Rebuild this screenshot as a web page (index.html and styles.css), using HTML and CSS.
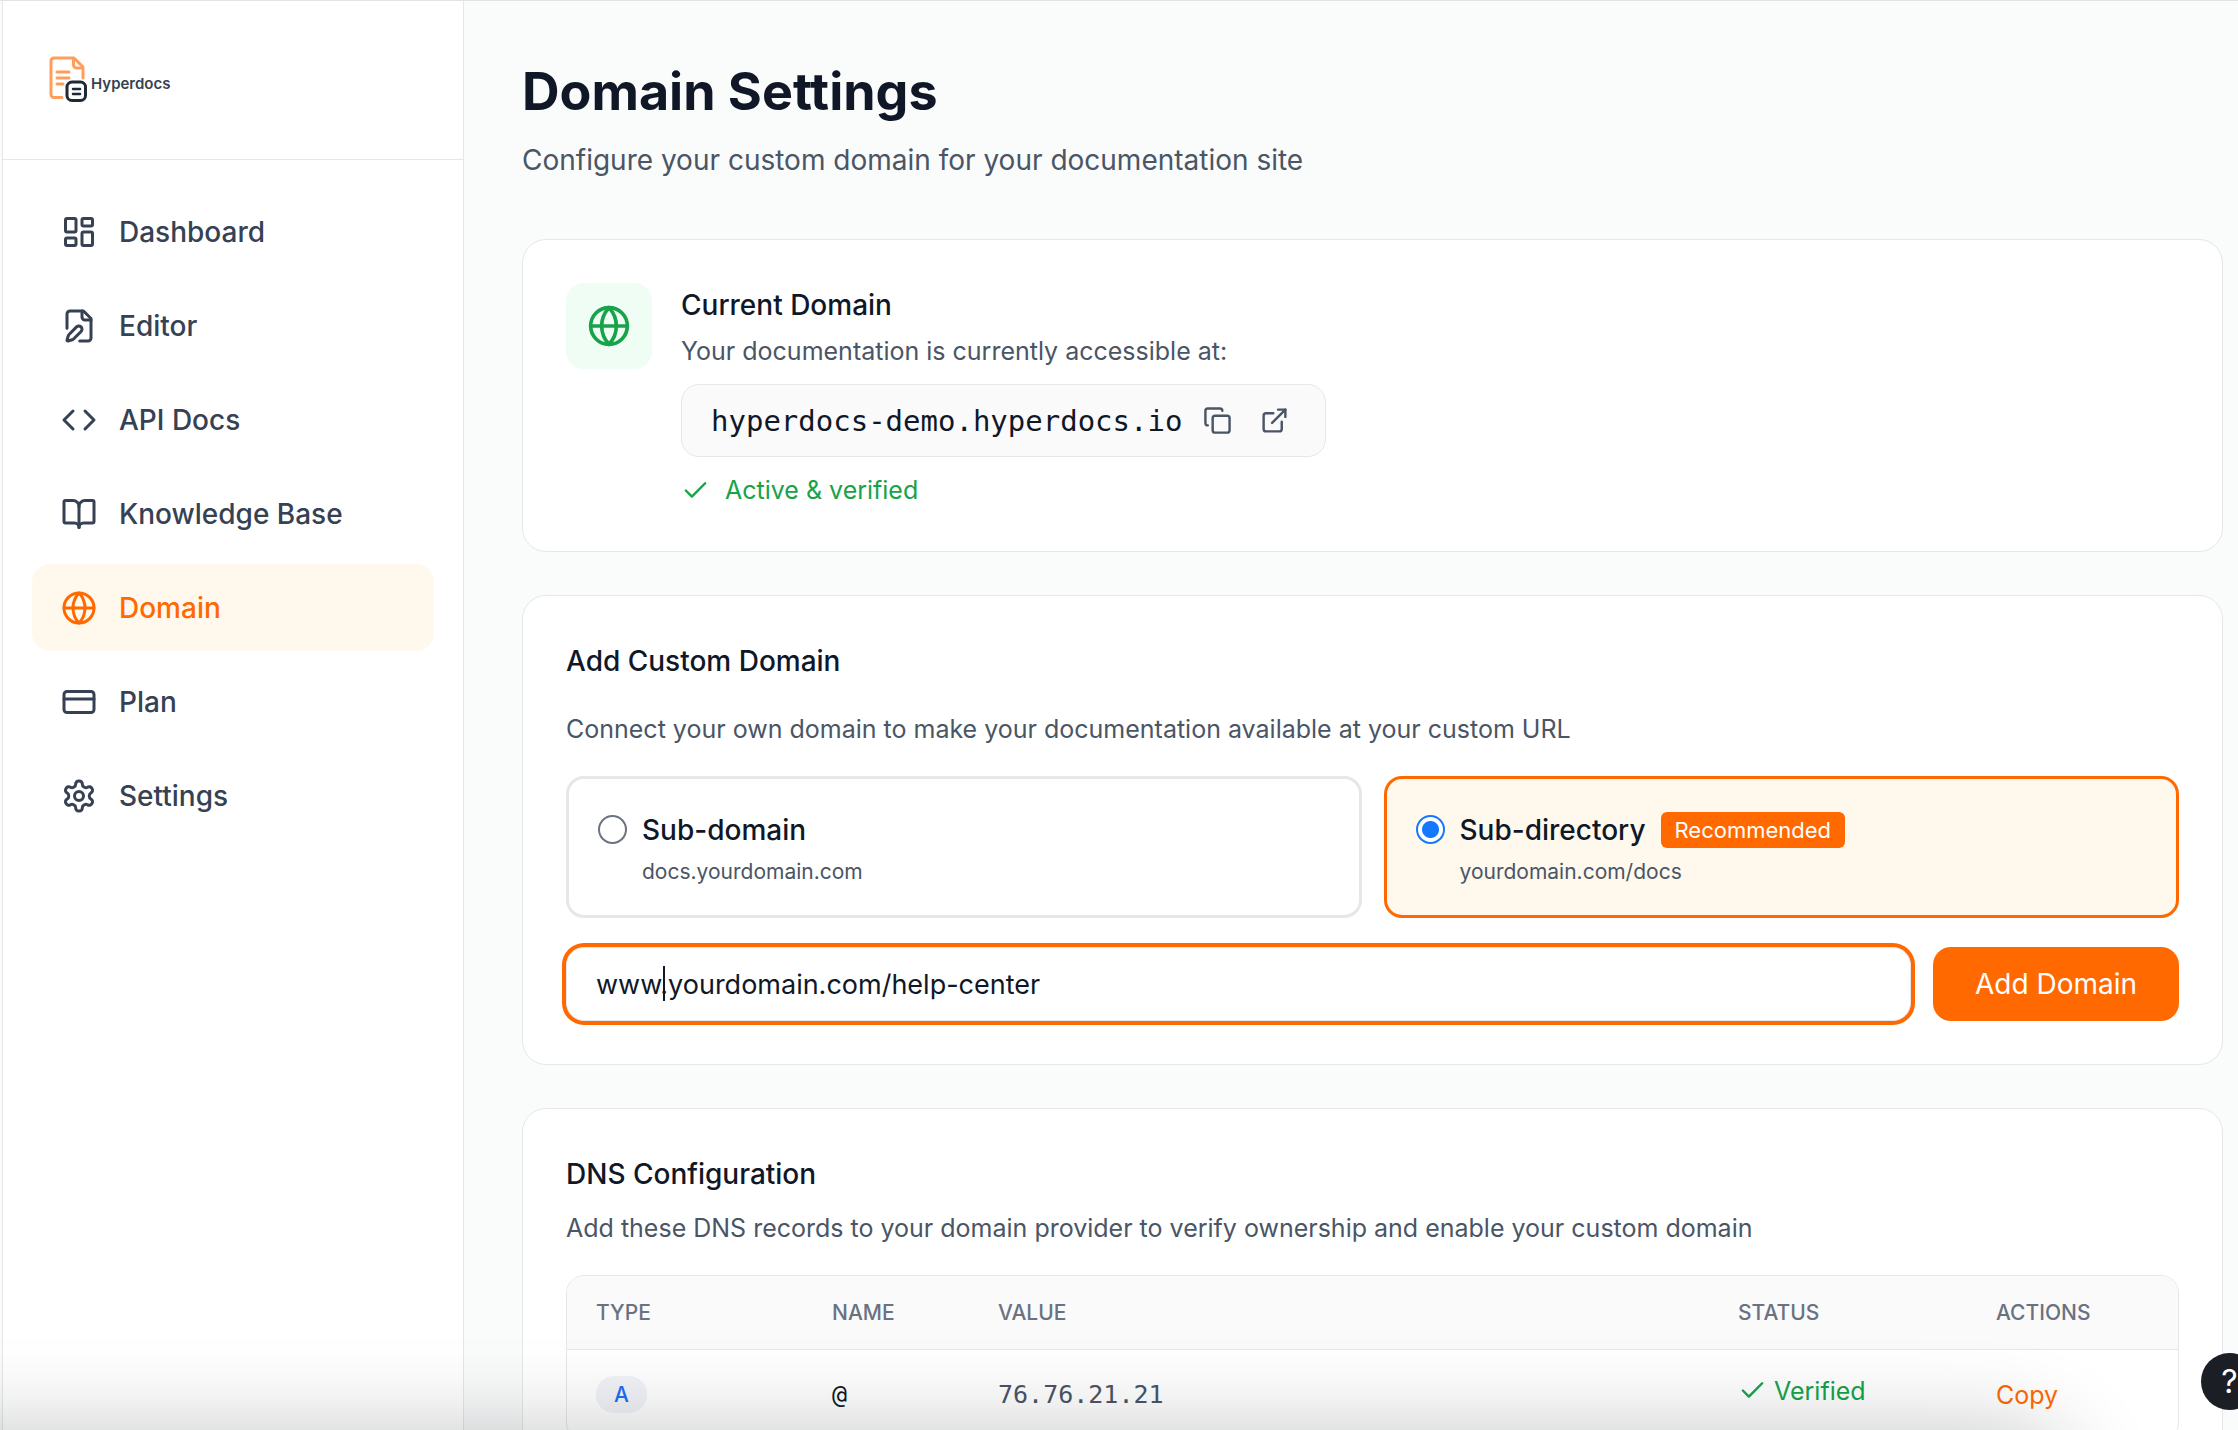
FILE: index.html
```html
<!DOCTYPE html>
<html lang="en">
<head>
  <meta charset="utf-8">
  <meta name="viewport" content="width=device-width, initial-scale=1">
  <title>Domain Settings – Hyperdocs</title>
  <link rel="stylesheet" href="styles.css">
</head>
<body>
  <svg class="sprite" aria-hidden="true">
    <symbol id="i-globe" viewBox="0 0 24 24"><circle cx="12" cy="12" r="10"/><path d="M12 2a14.5 14.5 0 0 0 0 20 14.5 14.5 0 0 0 0-20"/><path d="M2 12h20"/></symbol>
    <symbol id="i-check" viewBox="0 0 24 24"><path d="M20 6 9 17l-5-5"/></symbol>
  </svg>
  <div class="app">
    <aside class="sidebar">
      <a class="brand" href="#">
        <svg class="brand-mark" viewBox="0 0 38 46" fill="none" stroke-linecap="round" stroke-linejoin="round">
          <g stroke="#ff9d5c" stroke-width="3">
            <path d="M13 40.500H5a3 3 0 0 1-3-3V4a3 3 0 0 1 3-3h20l9 9v11"/>
            <path d="M24.500 2v6a3 3 0 0 0 3 3h6"/>
            <path d="M8 15h12M8 21h12M8 27h6"/>
          </g>
          <rect x="18" y="25" width="18.500" height="18.500" rx="5" stroke="#1f2937" stroke-width="3"/>
          <path d="M24 32h7M24 37h7" stroke="#1f2937" stroke-width="2.500"/>
        </svg>
        <span class="brand-name">Hyperdocs</span>
      </a>
      <nav class="nav" aria-label="Main">
        <a class="nav-item" href="#"><svg class="icon icon-lg" viewBox="0 0 24 24"><rect width="7" height="9" x="3" y="3" rx="1"/><rect width="7" height="5" x="14" y="3" rx="1"/><rect width="7" height="9" x="14" y="12" rx="1"/><rect width="7" height="5" x="3" y="16" rx="1"/></svg>Dashboard</a>
        <a class="nav-item" href="#"><svg class="icon icon-lg" viewBox="0 0 24 24"><path d="M12.500 22H18a2 2 0 0 0 2-2V7l-5-5H6a2 2 0 0 0-2 2v9.500"/><path d="M14 2v4a2 2 0 0 0 2 2h4"/><path d="M13.378 15.626a1 1 0 1 0-3.004-3.004l-5.010 5.012a2 2 0 0 0-.506.854l-.837 2.870a.5.5 0 0 0 .620.620l2.870-.837a2 2 0 0 0 .854-.506z"/></svg>Editor</a>
        <a class="nav-item" href="#"><svg class="icon icon-lg" viewBox="0 0 24 24"><path d="m16 18 6-6-6-6"/><path d="m8 6-6 6 6 6"/></svg>API Docs</a>
        <a class="nav-item" href="#"><svg class="icon icon-lg" viewBox="0 0 24 24"><path d="M12 7v14"/><path d="M3 18a1 1 0 0 1-1-1V4a1 1 0 0 1 1-1h5a4 4 0 0 1 4 4 4 4 0 0 1 4-4h5a1 1 0 0 1 1 1v13a1 1 0 0 1-1 1h-6a3 3 0 0 0-3 3 3 3 0 0 0-3-3z"/></svg>Knowledge Base</a>
        <a class="nav-item active" href="#" aria-current="page"><svg class="icon icon-lg"><use href="#i-globe"/></svg>Domain</a>
        <a class="nav-item" href="#"><svg class="icon icon-lg" viewBox="0 0 24 24"><rect width="20" height="14" x="2" y="5" rx="2"/><path d="M2 10h20"/></svg>Plan</a>
        <a class="nav-item" href="#"><svg class="icon icon-lg" viewBox="0 0 24 24"><path d="M12.220 2h-.440a2 2 0 0 0-2 2v.180a2 2 0 0 1-1 1.730l-.430.250a2 2 0 0 1-2 0l-.150-.080a2 2 0 0 0-2.730.730l-.220.380a2 2 0 0 0 .730 2.730l.150.100a2 2 0 0 1 1 1.720v.510a2 2 0 0 1-1 1.740l-.150.090a2 2 0 0 0-.730 2.730l.220.380a2 2 0 0 0 2.730.730l.150-.080a2 2 0 0 1 2 0l.430.250a2 2 0 0 1 1 1.730V20a2 2 0 0 0 2 2h.440a2 2 0 0 0 2-2v-.180a2 2 0 0 1 1-1.730l.430-.250a2 2 0 0 1 2 0l.150.080a2 2 0 0 0 2.730-.730l.220-.390a2 2 0 0 0-.730-2.730l-.150-.080a2 2 0 0 1-1-1.740v-.500a2 2 0 0 1 1-1.740l.150-.090a2 2 0 0 0 .730-2.730l-.220-.380a2 2 0 0 0-2.730-.730l-.150.080a2 2 0 0 1-2 0l-.430-.250a2 2 0 0 1-1-1.730V4a2 2 0 0 0-2-2z"/><circle cx="12" cy="12" r="3"/></svg>Settings</a>
      </nav>
    </aside>

    <main class="main">
      <header class="page-head">
        <h1>Domain Settings</h1>
        <p>Configure your custom domain for your documentation site</p>
      </header>

      <section class="card current">
        <div class="tile"><svg class="icon icon-xl"><use href="#i-globe"/></svg></div>
        <div class="current-body">
          <h2>Current Domain</h2>
          <p class="note">Your documentation is currently accessible at:</p>
          <div class="domain-box">
            <code>hyperdocs-demo.hyperdocs.io</code>
            <button class="icon-btn" type="button" aria-label="Copy domain"><svg class="icon" viewBox="0 0 24 24"><rect width="14" height="14" x="8" y="8" rx="2"/><path d="M4 16c-1.100 0-2-.900-2-2V4c0-1.100.900-2 2-2h10c1.100 0 2 .900 2 2"/></svg></button>
            <a class="icon-btn" href="#" aria-label="Open site"><svg class="icon" viewBox="0 0 24 24"><path d="M15 3h6v6"/><path d="M10 14 21 3"/><path d="M18 13v6a2 2 0 0 1-2 2H5a2 2 0 0 1-2-2V8a2 2 0 0 1 2-2h6"/></svg></a>
          </div>
          <p class="verified"><svg class="icon"><use href="#i-check"/></svg>Active &amp; verified</p>
        </div>
      </section>

      <section class="card">
        <h2 class="spaced">Add Custom Domain</h2>
        <p class="note">Connect your own domain to make your documentation available at your custom URL</p>
        <form class="domain-form">
          <div class="options">
            <label class="option">
              <input type="radio" name="kind">
              <span class="option-text"><span class="option-title">Sub-domain</span><span class="option-hint">docs.yourdomain.com</span></span>
            </label>
            <label class="option selected">
              <input type="radio" name="kind" checked>
              <span class="option-text"><span class="option-title">Sub-directory<span class="badge">Recommended</span></span><span class="option-hint">yourdomain.com/docs</span></span>
            </label>
          </div>
          <div class="entry">
            <div class="field"><input class="text-input" type="text" value="www.yourdomain.com/help-center" aria-label="Custom domain"><span class="caret"></span></div>
            <button class="primary" type="button">Add Domain</button>
          </div>
        </form>
      </section>

      <section class="card">
        <h2>DNS Configuration</h2>
        <p class="note dns-note">Add these DNS records to your domain provider to verify ownership and enable your custom domain</p>
        <div class="table-wrap">
          <table>
            <colgroup><col class="c-type"><col class="c-name"><col><col class="c-status"><col class="c-actions"></colgroup>
            <thead><tr><th>TYPE</th><th>NAME</th><th>VALUE</th><th>STATUS</th><th>ACTIONS</th></tr></thead>
            <tbody>
              <tr>
                <td><span class="pill">A</span></td>
                <td class="mono strong">@</td>
                <td class="mono">76.76.21.21</td>
                <td><span class="status"><svg class="icon"><use href="#i-check"/></svg>Verified</span></td>
                <td><button class="link" type="button">Copy</button></td>
              </tr>
            </tbody>
          </table>
        </div>
      </section>
    </main>
    <div class="fade"></div>
    <button class="help" type="button" aria-label="Help">?</button>
  </div>
</body>
</html>
```

FILE: styles.css
```css
:root {
  --orange: #ff6900;
  --cream: #fff8ed;
  --green: #16a34a;
  --ink: #101828;
  --slate: #364153;
  --muted: #4a5565;
  --line: #e6e7e8;
}

* { box-sizing: border-box; }

body {
  margin: 0;
  font-family: Inter, "Liberation Sans", sans-serif;
  font-size: 28px;
  color: var(--ink);
  background: #fafbfb;
}

h1, h2, p { margin: 0; }
button, input { font: inherit; }
button { border: 0; background: none; padding: 0; }

.sprite { display: none; }

.icon {
  flex: none;
  width: 29px;
  height: 29px;
  fill: none;
  stroke: currentColor;
  stroke-width: 2;
  stroke-linecap: round;
  stroke-linejoin: round;
}
.icon-lg { width: 36px; height: 36px; }
.icon-xl { width: 44px; height: 44px; }

.app {
  position: relative;
  display: flex;
  height: 100vh;
  overflow: hidden;
  border-top: 1px solid #e2e3e3;
}

.sidebar {
  flex: none;
  width: 462px;
  margin-left: 2px;
  border: solid var(--line);
  border-width: 0 1px;
  background: #fff;
}

.brand {
  display: flex;
  align-items: center;
  gap: 4px;
  height: 159px;
  padding: 0 46px;
  border-bottom: 1px solid var(--line);
  color: #374151;
  text-decoration: none;
}
.brand-mark { width: 38px; height: 46px; overflow: visible; }
.brand-name { font-size: 15px; font-weight: 600; line-height: 20px; padding-top: 8px; }

.nav {
  display: flex;
  flex-direction: column;
  gap: 7px;
  padding: 28px 29px;
}
.nav-item {
  display: flex;
  align-items: center;
  gap: 22px;
  height: 87px;
  padding: 0 29px;
  border-radius: 18px;
  color: var(--slate);
  font-weight: 500;
  text-decoration: none;
}
.nav-item.active { background: var(--cream); color: var(--orange); }

.main {
  flex: 1;
  min-width: 0;
  display: flex;
  flex-direction: column;
  gap: 43px;
  padding: 58px 15px 58px 58px;
}

.page-head { padding-bottom: 14px; }
.page-head h1 { font-size: 52px; font-weight: 700; line-height: 66px; }
.page-head p { margin-top: 13px; line-height: 44px; color: var(--muted); }

.card {
  flex: none;
  padding: 43px;
  border: 1px solid var(--line);
  border-radius: 24px;
  background: #fff;
}
.card h2 { font-size: 28px; font-weight: 500; line-height: 44px; }
.card h2.spaced { margin-bottom: 28px; }
.note { font-size: 25px; line-height: 36px; color: var(--muted); }

.current { display: flex; gap: 29px; }
.tile {
  display: grid;
  place-items: center;
  flex: none;
  width: 86px;
  height: 86px;
  border-radius: 18px;
  background: #f0fdf4;
  color: var(--green);
}
.current-body { display: flex; flex-direction: column; align-items: flex-start; }
.current-body .note { margin-top: 6px; }
.domain-box {
  display: flex;
  align-items: center;
  gap: 14px;
  height: 73px;
  margin: 15px 0;
  padding: 0 29px;
  border: 1px solid var(--line);
  border-radius: 18px;
  background: #fafafa;
}
code, .mono { font-family: "DejaVu Sans Mono", monospace; }
code { font-size: 29px; }
.icon-btn { display: grid; padding: 7px; color: var(--muted); }
.verified {
  display: flex;
  align-items: center;
  gap: 15px;
  font-size: 25px;
  line-height: 36px;
  color: var(--green);
}

.options { display: grid; grid-template-columns: 1fr 1fr; gap: 22px; margin-top: 29px; }
.option {
  display: flex;
  align-items: flex-start;
  gap: 15px;
  padding: 29px;
  border: 3px solid #e7e7e7;
  border-radius: 18px;
}
.option.selected { border-color: var(--orange); background: var(--cream); }
.option input {
  appearance: none;
  flex: none;
  width: 29px;
  height: 29px;
  margin: 7px 0 0;
  border: 2px solid #6b7280;
  border-radius: 50%;
  background: #fff;
}
.option input:checked {
  border-color: #1677ff;
  background: radial-gradient(circle, #1677ff 8px, #fff 9px);
}
.option-text { display: flex; flex-direction: column; }
.option-title { display: flex; align-items: center; gap: 15px; font-weight: 500; line-height: 44px; }
.option-hint { margin-top: 6px; font-size: 21px; line-height: 28px; color: var(--muted); }
.badge {
  padding: 0 14px;
  border-radius: 6px;
  background: var(--orange);
  color: #fff;
  font-size: 22px;
  font-weight: 400;
  line-height: 36px;
}

.entry { display: flex; gap: 22px; margin-top: 29px; }
.field { position: relative; flex: 1; display: flex; }
.text-input {
  flex: 1;
  min-width: 0;
  height: 74px;
  padding: 0 29px;
  border: 1px solid #e0e7ef;
  border-radius: 18px;
  outline: 0;
  box-shadow: 0 0 0 4px var(--orange);
  color: var(--ink);
  font-size: 27px;
}
.caret {
  position: absolute;
  top: 19px;
  left: 97px;
  width: 2px;
  height: 35px;
  background: var(--ink);
}
.primary {
  padding: 0 42px;
  border-radius: 18px;
  background: var(--orange);
  color: #fff;
}

.dns-note { margin-top: 14px; }
.table-wrap {
  margin-top: 29px;
  overflow: hidden;
  border: 1px solid var(--line);
  border-radius: 18px;
}
table { width: 100%; table-layout: fixed; border-collapse: collapse; font-size: 25px; }
.c-type { width: 236px; }
.c-name { width: 166px; }
.c-status { width: 258px; }
.c-actions { width: 211px; }
th {
  height: 73px;
  padding: 0 29px;
  border-bottom: 1px solid var(--line);
  background: #fafafa;
  color: #6a7282;
  font-size: 21px;
  font-weight: 500;
  text-align: left;
}
td { height: 91px; padding: 0 29px; }
.mono { color: var(--muted); }
.mono.strong { color: var(--ink); }
.pill {
  display: inline-block;
  padding: 0 18px;
  border-radius: 18px;
  background: #f1f3f7;
  color: #1c6ef5;
  font-size: 21px;
  font-weight: 500;
  line-height: 37px;
}
.status { display: flex; align-items: center; gap: 7px; padding-bottom: 8px; color: var(--green); }
.link { color: var(--orange); }

/* soft shade cast upwards from below the bottom edge of the window */
.fade {
  position: absolute;
  left: -200px;
  right: 170px;
  top: 100%;
  height: 300px;
  border-radius: 60px;
  pointer-events: none;
  box-shadow: 0 0 90px rgba(16, 20, 24, 0.24);
}
.help {
  position: absolute;
  right: -20px;
  bottom: 20px;
  width: 57px;
  height: 57px;
  border-radius: 50%;
  background: #1c1e26;
  color: #fff;
  font-size: 32px;
}
```
